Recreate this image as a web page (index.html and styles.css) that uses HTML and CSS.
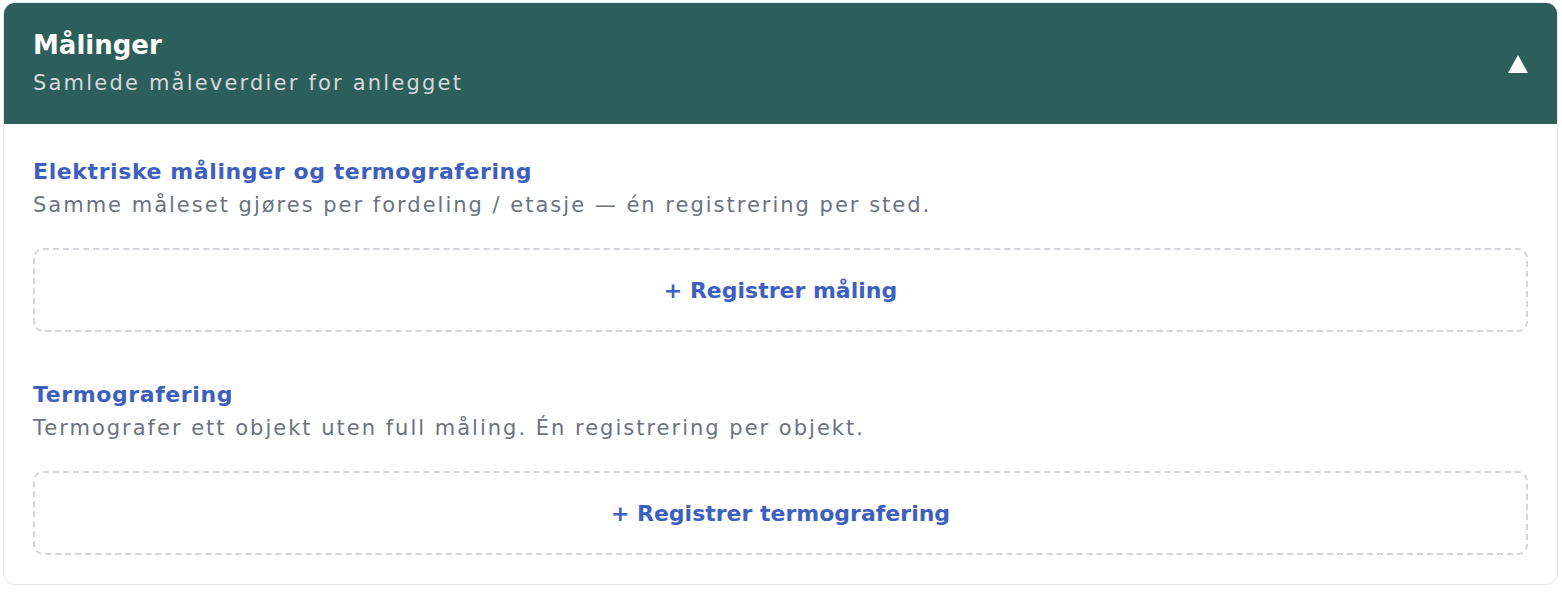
FILE: index.html
```html
<!DOCTYPE html>
<html lang="no">
<head>
<meta charset="utf-8">
<title>Målinger</title>
<link rel="stylesheet" href="styles.css">
</head>
<body>
<section class="card">
  <header class="card-header">
    <div class="header-text">
      <h2 class="title">Målinger</h2>
      <p class="subtitle">Samlede måleverdier for anlegget</p>
    </div>
    <svg class="toggle" width="20" height="18" viewBox="0 0 20 18" aria-hidden="true"><polygon points="10,0 20,18 0,18" fill="#ffffff"/></svg>
  </header>
  <div class="card-body">
    <div class="group">
      <h3 class="group-title">Elektriske målinger og termografering</h3>
      <p class="group-desc">Samme måleset gjøres per fordeling / etasje — én registrering per sted.</p>
      <button class="add-btn">+ Registrer måling</button>
    </div>
    <div class="group">
      <h3 class="group-title">Termografering</h3>
      <p class="group-desc">Termografer ett objekt uten full måling. Én registrering per objekt.</p>
      <button class="add-btn">+ Registrer termografering</button>
    </div>
  </div>
</section>
</body>
</html>
```
FILE: styles.css
```css
* { box-sizing: border-box; }
html, body { margin: 0; background: #ffffff; }
body {
  padding: 2px 4px 0 3px;
  font-family: "DejaVu Sans", "Noto Sans", sans-serif;
}
.card {
  border: 1px solid #e5e7eb;
  border-radius: 12px;
  overflow: hidden;
  background: #fff;
}
.card-header {
  background: #2c5f5a;
  display: flex;
  align-items: center;
  justify-content: space-between;
  padding: 26px 29px 27px 29px;
}
.title {
  margin: 0;
  color: #fff;
  font-size: 26px;
  font-weight: 700;
  line-height: 32px;
}
.subtitle {
  margin: 8px 0 0;
  color: #d5d8dd;
  font-size: 21px;
  line-height: 28px;
  letter-spacing: 2.2px;
}
.toggle {
  display: block;
  margin-top: 2px;
}
.card-body {
  padding: 33px 29px 29px;
  display: flex;
  flex-direction: column;
  gap: 48px;
}
.group-title {
  margin: 0;
  color: #3d60bf;
  font-size: 22px;
  font-weight: 700;
  line-height: 30px;
  letter-spacing: 0.6px;
}
.group-desc {
  margin: 4px 0 0;
  color: #6b7280;
  font-size: 21px;
  line-height: 28px;
  letter-spacing: 2px;
}
.add-btn {
  display: block;
  width: 100%;
  margin-top: 29px;
  height: 84px;
  background: #fff;
  border: 2px dashed #d3d5dc;
  border-radius: 10px;
  color: #3d60bf;
  font-family: inherit;
  font-size: 22px;
  font-weight: 700;
  cursor: pointer;
}
```
